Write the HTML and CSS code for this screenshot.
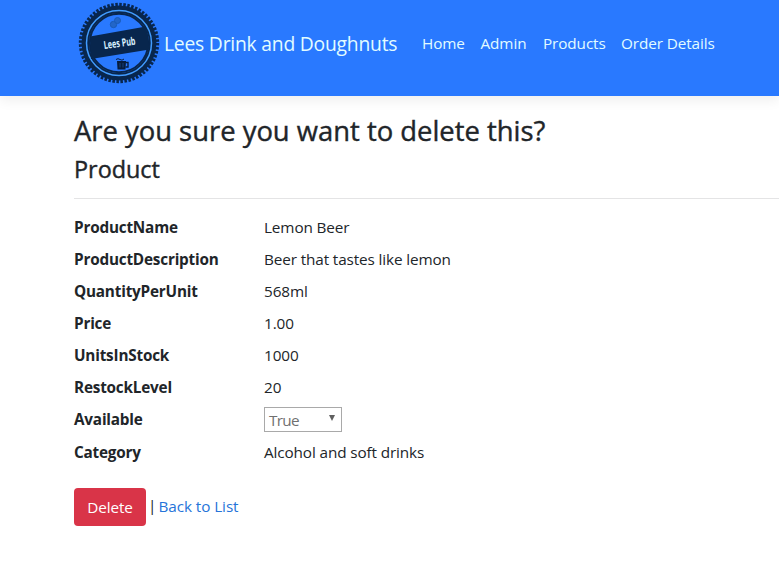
FILE: index.html
```html
<!DOCTYPE html>
<html lang="en">
<head>
<meta charset="utf-8">
<title>Delete - Lees Drink and Doughnuts</title>
<link rel="stylesheet" href="styles.css">
</head>
<body>
<header class="navbar">
  <a class="brand" href="#">
    <svg class="logo" viewBox="0 0 82 82" aria-hidden="true">
      <circle class="teeth" cx="41" cy="41" r="38.2"/>
      <circle class="ring" cx="41" cy="41" r="33.7"/>
      <circle class="ring-light" cx="41" cy="41" r="32.5"/>
      <circle class="ring-inner" cx="41" cy="41" r="29.2"/>
      <g class="doughnuts"><circle cx="35.5" cy="22.5" r="3.2"/><circle cx="39.5" cy="18.5" r="3"/></g>
      <path class="band" d="M12 34.5 68 24.5 71.5 47.5 13 57z"/>
      <g class="mug"><path d="M39 59h9l-.5 8.5h-8z"/><path class="handle" d="M47.5 60.5h2.5v4.5h-2.5"/><path class="foam" d="M38 57.5q2-1.6 4 0t4-.5"/><path class="glass" d="M42 61v4.5M45 61v4.5"/></g>
      <text class="logo-text" x="41.5" y="45" transform="rotate(-8 41 41)" textLength="32" lengthAdjust="spacingAndGlyphs">Lees Pub</text>
    </svg>
    <span class="brand-name">Lees Drink and Doughnuts</span>
  </a>
  <nav class="links">
    <a class="home" href="#">Home</a>
    <a class="admin" href="#">Admin</a>
    <a class="products" href="#">Products</a>
    <a class="orders" href="#">Order Details</a>
  </nav>
</header>
<main class="content">
  <h1>Are you sure you want to delete this?</h1>
  <h2>Product</h2>
  <hr>
  <dl class="details">
    <dt>ProductName</dt><dd>Lemon Beer</dd>
    <dt>ProductDescription</dt><dd>Beer that tastes like lemon</dd>
    <dt>QuantityPerUnit</dt><dd>568ml</dd>
    <dt>Price</dt><dd>1.00</dd>
    <dt>UnitsInStock</dt><dd>1000</dd>
    <dt>RestockLevel</dt><dd>20</dd>
    <dt>Available</dt><dd><div class="select"><span>True</span><svg class="arrow" viewBox="0 0 6 6" aria-hidden="true"><path d="M0 0h6L3 6z"/></svg></div></dd>
    <dt>Category</dt><dd>Alcohol and soft drinks</dd>
  </dl>
  <form class="actions">
    <button type="button">Delete</button>
    <span class="divider">|</span>
    <a href="#">Back to List</a>
  </form>
</main>
</body>
</html>
```
FILE: styles.css
```css
* { box-sizing: border-box; }
body {
  margin: 0;
  background: #fff;
  color: #212529;
  font: 400 15.3px/24px "Open Sans", "Noto Sans", sans-serif;
  letter-spacing: -.08px;
  overflow: hidden;
}
a { text-decoration: none; }
.navbar {
  display: flex;
  align-items: flex-start;
  height: 96px;
  padding: 2px 0 0 78px;
  background: #2979ff;
  box-shadow: 0 4px 12px rgba(0, 0, 0, .07);
}
.navbar a { color: #e2fcff; }
.brand { display: flex; align-items: center; width: 344px; height: 82px; }
.logo { flex: none; width: 82px; height: 82px; margin-right: 4px; }
.brand-name { padding-top: 2px; font-size: 19.3px; letter-spacing: -.21px; white-space: nowrap; }
.links { display: flex; height: 82px; align-items: center; white-space: nowrap; letter-spacing: -.1px; }
.home { width: 58.5px; }
.admin { width: 62.5px; }
.products { width: 78px; }

.teeth { fill: none; stroke: #08264d; stroke-width: 4; stroke-dasharray: 2.5 1.5; }
.ring { fill: none; stroke: #08264d; stroke-width: 7.5; }
.ring-light { fill: none; stroke: #429cff; stroke-width: 1.5; }
.ring-inner { fill: none; stroke: #08264d; stroke-width: 2; }
.band { fill: #08264d; }
.doughnuts { fill: #2366c8; stroke: #195bb9; stroke-width: 1; }
.mug { fill: #071c3c; }
.handle, .foam { fill: none; stroke: #071c3c; stroke-width: 1.4; }
.foam { stroke-width: 1; }
.glass { stroke: #1d519b; stroke-width: .7; }
.logo-text { fill: #d9f0ff; font: 700 11px "Open Sans", sans-serif; letter-spacing: 0; text-anchor: middle; }

.content { padding: 15px 0 0 74px; }
h1, h2 { margin: 0 0 8px; font-weight: 500; -webkit-text-stroke: .4px currentColor; }
h1 { height: 34px; font-size: 27.4px; line-height: 40px; letter-spacing: 0; }
h2 { height: 29px; font-size: 23.4px; line-height: 33px; letter-spacing: 0; }
hr { height: 1px; margin: 16px 0; border: 0; background: #e4e4e5; }
.details {
  display: grid;
  grid-template-columns: 190px 1fr;
  row-gap: 8px;
  margin: 0 0 24px;
}
dt { font-weight: 700; letter-spacing: -.2px; }
dd { margin: 0; letter-spacing: -.12px; }
.select {
  display: flex;
  align-items: center;
  justify-content: space-between;
  width: 78px;
  height: 25px;
  padding: 1px 6px 1px 4px;
  border: 1px solid #a9a9a9;
  color: #707070;
  letter-spacing: -.7px;
}
.arrow { width: 6px; height: 6px; margin-top: -4px; fill: #606060; }
.actions { display: flex; }
button {
  width: 72px;
  height: 38px;
  margin-top: -8px;
  padding: 0;
  border: 0;
  border-radius: 4px;
  background: #d93448;
  color: #fff;
  font: inherit;
  letter-spacing: -.1px;
}
.actions { padding-top: 8px; }
.divider { width: 12.5px; margin-top: -3px; padding-left: 2px; }
.actions a { margin-top: -2px; color: #2674d9; }
```
